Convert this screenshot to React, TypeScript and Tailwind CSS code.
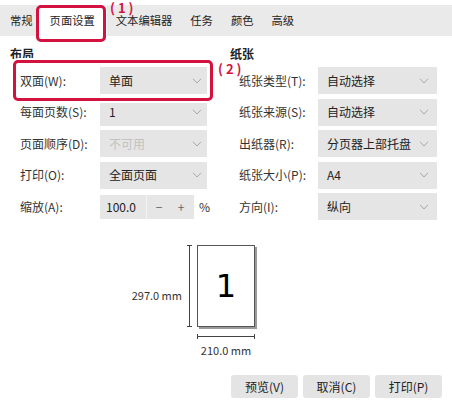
const TABS = ['常规', '页面设置', '文本编辑器', '任务', '颜色', '高级'];

function Chevron() {
  return (
    <svg width="10" height="6" viewBox="0 0 10 6" fill="none" className="text-[#a8a8a8]">
      <path d="M1 0.8 L5 5 L9 0.8" stroke="currentColor" strokeWidth="1" />
    </svg>
  );
}

function Select({ value, disabled, right }: { value: string; disabled?: boolean; right?: boolean }) {
  return (
    <div
      className={`flex h-[27px] items-center justify-between bg-[#e5e5e5] pl-[9px] ${
        right ? 'w-[119px] pr-[8px]' : 'w-[107px] pr-[5px]'
      }`}
    >
      <span className={disabled ? 'text-[#c2c2c2]' : 'text-[#222]'}>{value}</span>
      <Chevron />
    </div>
  );
}

function Row({ label, children, right }: { label: string; children: React.ReactNode; right?: boolean }) {
  return (
    <div className="flex h-[27px] items-center">
      <span className={`${right ? 'w-[79px]' : 'w-[80px]'} text-[#333]`}>{label}</span>
      {children}
    </div>
  );
}

export default function App() {
  return (
    <main
      className="relative h-[409px] w-[452px] overflow-hidden bg-white text-[12px]"
      style={{ fontFamily: '"Noto Sans CJK SC", "Noto Sans", sans-serif' }}
    >
      {/* Tabs */}
      <div className="mt-[5px] flex h-[31px] items-stretch bg-[#eaeaea] text-[11.3px] text-[#222]">
        {TABS.map((t, i) => (
          <div
            key={t}
            className={`flex items-center ${i === 0 ? 'pl-[10px] pr-[5px]' : 'px-[9px]'} ${
              i === 1 ? 'bg-white px-[12px]' : ''
            }`}
          >
            {t}
          </div>
        ))}
      </div>

      {/* Settings */}
      <div className="mt-[11px] flex">
        <section className="w-[220px] pl-[10px]">
          <h2 className="h-[20px] font-bold leading-[14px] text-[#222]">布局</h2>
          <div className="flex flex-col gap-[4.5px] pl-[10px]">
            <Row label="双面(W):">
              <Select value="单面" />
            </Row>
            <Row label="每面页数(S):">
              <Select value="1" />
            </Row>
            <Row label="页面顺序(D):">
              <Select value="不可用" disabled />
            </Row>
            <Row label="打印(O):">
              <Select value="全面页面" />
            </Row>
            <Row label="缩放(A):">
              <div className="flex h-[24px] w-[94px] items-center bg-[#e6e6e6] text-[#222]">
                <span className="w-[46px] pl-[6px]">100.0</span>
                <span className="h-full w-px bg-[#f3f3f3]" />
                <span className="w-[24px] text-center text-[#666]">−</span>
                <span className="w-[20px] text-center text-[#666]">+</span>
              </div>
              <span className="ml-[5px] text-[#333]">%</span>
            </Row>
          </div>
        </section>
        <section className="flex-1 pl-[10px]">
          <h2 className="h-[20px] font-bold leading-[14px] text-[#222]">纸张</h2>
          <div className="flex flex-col gap-[4.5px] pl-[9px]">
            <Row label="纸张类型(T):" right>
              <Select value="自动选择" right />
            </Row>
            <Row label="纸张来源(S):" right>
              <Select value="自动选择" right />
            </Row>
            <Row label="出纸器(R):" right>
              <Select value="分页器上部托盘" right />
            </Row>
            <Row label="纸张大小(P):" right>
              <Select value="A4" right />
            </Row>
            <Row label="方向(I):" right>
              <Select value="纵向" right />
            </Row>
          </div>
        </section>
      </div>

      {/* Preview */}
      <div className="mt-[25px] grid grid-cols-[1fr_auto_1fr] text-[11px] text-[#333]">
        <div className="flex h-[82px] items-stretch justify-end pr-[5px]">
          <span className="mr-[5px] self-center pt-[18px]">297.0 mm</span>
          <div className="flex w-[5px] flex-col items-center">
            <div className="h-px w-[5px] bg-[#444]" />
            <div className="w-px flex-1 bg-[#444]" />
            <div className="h-px w-[5px] bg-[#444]" />
          </div>
        </div>
        <div className="flex flex-col items-center">
          <div className="flex h-[82px] w-[58px] items-center justify-center border border-[#555] bg-white shadow-[2px_2px_0_#9a9a9a]">
            <span className="text-[32px] leading-none text-black" style={{ fontFamily: '"DejaVu Sans", sans-serif' }}>
              1
            </span>
          </div>
          <div className="mt-[7px] flex h-[5px] w-[58px] items-center">
            <div className="h-[5px] w-px bg-[#444]" />
            <div className="h-px flex-1 bg-[#444]" />
            <div className="h-[5px] w-px bg-[#444]" />
          </div>
          <span className="mt-[3px]">210.0 mm</span>
        </div>
        <div />
      </div>

      {/* Buttons */}
      <div className="absolute bottom-[11px] right-[10px] flex gap-[5px]">
        {['预览(V)', '取消(C)', '打印(P)'].map((b) => (
          <button key={b} className="h-[23px] w-[67px] rounded-[3px] bg-[#e4e4e4] text-[12px] text-[#222]">
            {b}
          </button>
        ))}
      </div>

      {/* Annotations */}
      <div className="absolute left-[36px] top-[5px] h-[37px] w-[70px] rounded-[5px] border-[3px] border-[#d3123f]" />
      <span className="absolute left-[110px] top-[1px] text-[13px] font-bold leading-[13px] tracking-[3px] text-[#d3123f]">
        (1)
      </span>
      <div className="absolute left-[13px] top-[60px] h-[41px] w-[200px] rounded-[5px] border-[3px] border-[#d3123f] shadow-[0_0_0_2px_#fff]" />
      <span className="absolute left-[218px] top-[62px] text-[13px] font-bold leading-[13px] tracking-[3px] text-[#d3123f]">
        (2)
      </span>
    </main>
  );
}
